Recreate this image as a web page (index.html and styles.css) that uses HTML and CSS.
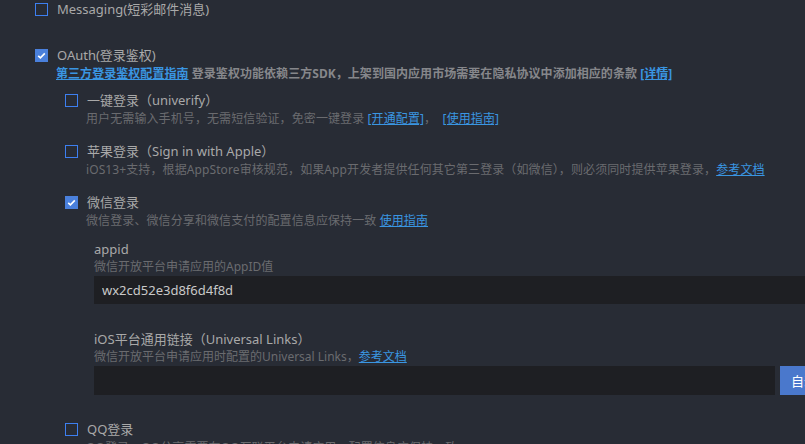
FILE: index.html
```html
<!DOCTYPE html>
<html lang="zh-CN">
<head>
    <meta charset="UTF-8">
    <title>模块配置</title>
    <link rel="stylesheet" href="styles.css">
</head>
<body>
    <div class="panel">
        <div class="module">
            <label class="row title">
                <span class="box"></span>
                <span>Messaging(短彩邮件消息)</span>
            </label>
        </div>

        <div class="module oauth">
            <label class="row title">
                <span class="box checked">
                    <svg viewBox="0 0 13 13" width="13" height="13"><path d="M3.2 6.8 L5.4 8.9 L9.8 4.4" fill="none" stroke="#fff" stroke-width="1.6"/></svg>
                </span>
                <span>OAuth(登录鉴权)</span>
            </label>
            <div class="desc strong">
                <a href="#">第三方登录鉴权配置指南</a> 登录鉴权功能依赖三方SDK，上架到国内应用市场需要在隐私协议中添加相应的条款 <a href="#">[详情]</a>
            </div>

            <div class="sub">
                <label class="row title">
                    <span class="box"></span>
                    <span>一键登录（univerify）</span>
                </label>
                <div class="desc">用户无需输入手机号，无需短信验证，免密一键登录 <a href="#">[开通配置]</a>，&nbsp; <a href="#">[使用指南]</a></div>
            </div>

            <div class="sub">
                <label class="row title">
                    <span class="box"></span>
                    <span>苹果登录（Sign in with Apple）</span>
                </label>
                <div class="desc">iOS13+支持，根据AppStore审核规范，如果App开发者提供任何其它第三登录（如微信），则必须同时提供苹果登录，<a href="#">参考文档</a></div>
            </div>

            <div class="sub">
                <label class="row title">
                    <span class="box checked">
                        <svg viewBox="0 0 13 13" width="13" height="13"><path d="M3.2 6.8 L5.4 8.9 L9.8 4.4" fill="none" stroke="#fff" stroke-width="1.6"/></svg>
                    </span>
                    <span>微信登录</span>
                </label>
                <div class="desc">微信登录、微信分享和微信支付的配置信息应保持一致 <a href="#">使用指南</a></div>

                <div class="fields">
                    <div class="field">
                        <div class="field-label">appid</div>
                        <div class="field-desc">微信开放平台申请应用的AppID值</div>
                        <div class="field-row">
                            <input class="input" type="text" value="wx2cd52e3d8f6d4f8d">
                        </div>
                    </div>
                    <div class="field">
                        <div class="field-label">iOS平台通用链接（Universal Links）</div>
                        <div class="field-desc">微信开放平台申请应用时配置的Universal Links，<a href="#">参考文档</a></div>
                        <div class="field-row">
                            <input class="input" type="text" value="">
                            <button class="btn">自动配置</button>
                        </div>
                    </div>
                </div>
            </div>

            <div class="sub">
                <label class="row title">
                    <span class="box"></span>
                    <span>QQ登录</span>
                </label>
                <div class="desc">QQ登录、QQ分享需要在QQ互联平台申请应用，配置信息应保持一致</div>
            </div>
        </div>
    </div>
</body>
</html>
```

FILE: styles.css
```css
html, body { margin: 0; padding: 0; background: #282c35; overflow: hidden; }
body { font-family: "Noto Sans", "Noto Sans CJK SC", sans-serif; color: #a9a9a9; width: 805px; height: 444px; }
.panel { padding-left: 35px; padding-top: 0; }
a { color: #3a96e2; text-decoration: underline; }

.module { margin-bottom: 27px; }
.row { display: flex; align-items: center; gap: 9px; }
.title { font-size: 13px; line-height: 19px; height: 19px; white-space: nowrap; }
.box { width: 13px; height: 13px; box-sizing: border-box; box-shadow: inset 0 0 0 1px #3d7ff0; background: transparent; flex: none; display: flex; align-items: center; justify-content: center; }
.box.checked { background: #4a80dc; box-shadow: none; }
.box svg { display: block; flex: none; }

.desc { font-size: 12px; line-height: 18px; color: #6a6b6f; padding-left: 22px; white-space: nowrap; letter-spacing: 0.1px; }
.desc.strong { font-weight: bold; color: #86878b; padding-left: 21px; letter-spacing: 0.05px; }
.oauth > .desc { margin-bottom: 8px; }

.sub { padding-left: 30px; margin-bottom: 14px; }
.sub .desc { padding-left: 21px; }

.fields { padding-left: 29px; width: 786px; margin-top: 10px; }
.field { margin-bottom: 25px; }
.field:first-child { margin-bottom: 26px; }
.field-label { font-size: 13px; line-height: 18px; color: #a9a9a9; }
.field-desc { font-size: 12px; line-height: 18px; color: #6a6b6f; white-space: nowrap; }
.field-row { display: flex; gap: 5px; }
.input { flex: 1; height: 28px; box-sizing: border-box; border: none; outline: none; background: #1e1f23; color: #c9c9c9; font-family: "Noto Sans", "Noto Sans CJK SC", sans-serif; font-size: 13px; padding: 0 8px; }
.field:last-child .input { height: 29px; }
.btn { flex: none; width: 100px; height: 29px; border: none; background: #4a78cc; color: #fff; font-family: "Noto Sans CJK SC", sans-serif; font-size: 13px; text-align: left; padding-left: 11px; }
```
